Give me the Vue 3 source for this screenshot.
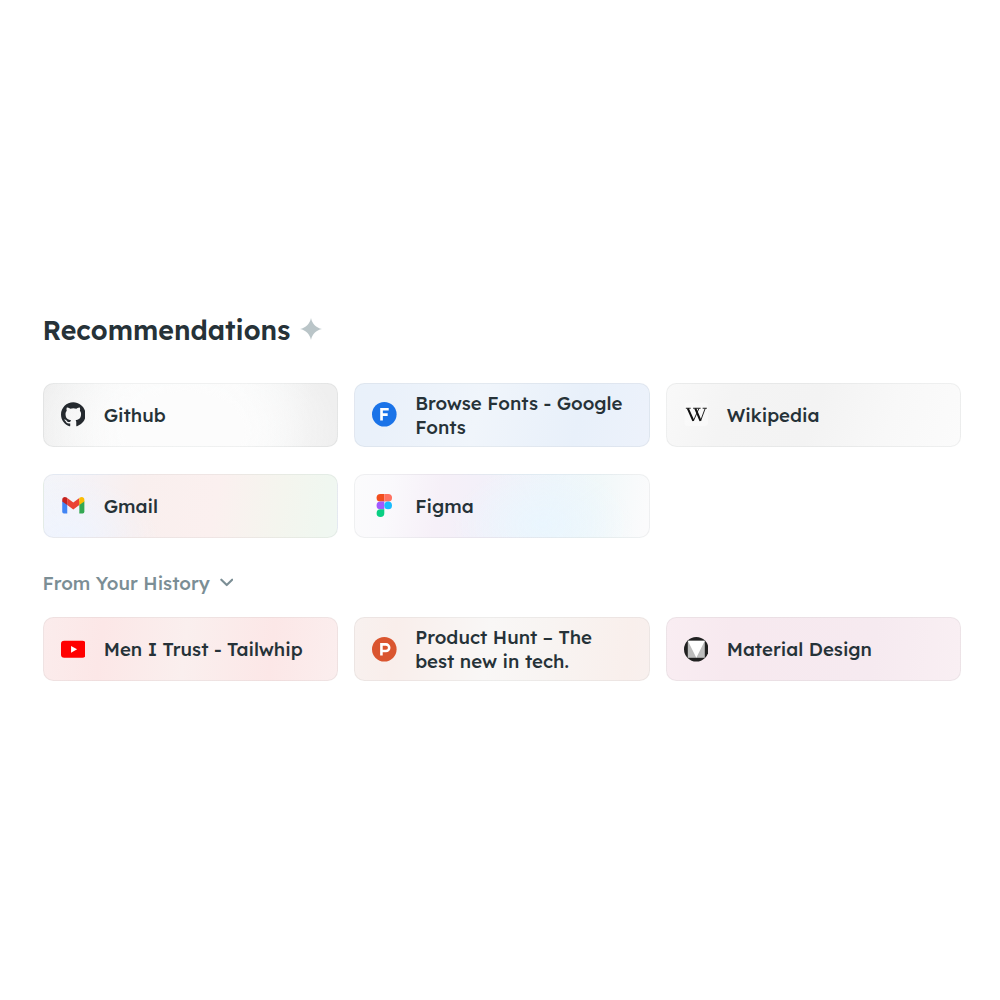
<script setup>
const recommended = [
  { id: 'github', lines: ['Github'] },
  { id: 'fonts', lines: ['Browse Fonts - Google', 'Fonts'] },
  { id: 'wikipedia', lines: ['Wikipedia'] },
  { id: 'gmail', lines: ['Gmail'] },
  { id: 'figma', lines: ['Figma'] }
]
const history = [
  { id: 'youtube', lines: ['Men I Trust - Tailwhip'] },
  { id: 'producthunt', lines: ['Product Hunt – The', 'best new in tech.'] },
  { id: 'material', lines: ['Material Design'] }
]
const groups = [recommended, history]
</script>

<template>
  <main class="page">
    <h1 class="title">
      <span>Recommendations</span>
      <svg class="spark" viewBox="0 0 22 22"><path d="M11 0 C12.300 6 16 9.700 22 11 C16 12.300 12.300 16 11 22 C9.700 16 6 12.300 0 11 C6 9.700 9.700 6 11 0Z" fill="#bac5c8" /></svg>
    </h1>

    <template v-for="(group, g) in groups" :key="g">
      <h2 v-if="g === 1" class="subtitle">
        <span>From Your History</span>
        <svg class="chevron" viewBox="0 0 14 9"><path d="M1.400 1.600 L7 7.100 L12.600 1.600" fill="none" stroke="#7b8e95" stroke-width="2.200" stroke-linecap="round" stroke-linejoin="round" /></svg>
      </h2>
      <div class="grid">
        <a v-for="item in group" :key="item.id" class="card" :class="item.id">
          <svg class="icon" viewBox="0 0 24 24">
            <path v-if="item.id === 'github'" fill="#24292e" fill-rule="evenodd" d="M12 .3C5.4.3 0 5.7 0 12.3c0 5.3 3.4 9.8 8.2 11.4.6.1.8-.3.8-.6v-2.2c-3.3.7-4-1.4-4-1.4-.6-1.4-1.4-1.8-1.4-1.8-1-.7.1-.7.1-.7 1.2.1 1.9 1.2 1.9 1.2 1 1.8 2.8 1.3 3.5 1 .1-.8.4-1.3.8-1.6-2.7-.3-5.5-1.3-5.5-5.900 0-1.300.5-2.400 1.200-3.200-.1-.3-.5-1.500.1-3.200 0 0 1-.3 3.300 1.200a11.500 11.500 0 0 1 6 0c2.300-1.500 3.300-1.200 3.300-1.200.7 1.700.2 2.900.1 3.200.8.8 1.200 1.900 1.200 3.200 0 4.600-2.800 5.600-5.500 5.900.4.4.8 1.100.8 2.200v3.300c0 .3.2.7.8.6A12 12 0 0 0 24 12.300C24 5.700 18.600.3 12 .3Z" />
            <g v-else-if="item.id === 'fonts'">
              <circle cx="12" cy="12" r="12" fill="#1a73e8" />
              <path d="M9.300 18V7.100H16.300M9.300 12.400H15.300" fill="none" stroke="#fff" stroke-width="2.600" />
            </g>
            <g v-else-if="item.id === 'wikipedia'">
              <rect x=".5" y=".5" width="23" height="23" rx="3" fill="#fff" opacity=".4" />
              <path d="M3.700 6.200 9.100 18.300M11 6.200 16.100 18.300" fill="none" stroke="#111" stroke-width="2" />
              <path d="M9.100 18.600 14.600 6.200M16.100 18.600 20.700 6.200M1.800 6.100H6.500M8.900 6.100H16.200M18.200 6.100H22.300" fill="none" stroke="#111" stroke-width=".9" />
            </g>
            <g v-else-if="item.id === 'gmail'">
              <path d="M1.200 8H6.100V20H2.800Q1.200 20 1.200 18.400Z" fill="#4285f4" />
              <path d="M17.900 8H22.800V18.400Q22.800 20 21.200 20H17.900Z" fill="#34a853" />
              <path d="M6.100 6.700V4.900L12 9.300 17.900 4.900V11.700L12 16.100 6.100 11.700Z" fill="#ea4335" />
              <path d="M1.200 6.500C1.200 3.800 3.900 3.200 5.500 4.400L6.100 4.900V11.700L1.200 8.400Z" fill="#c5221f" />
              <path d="M22.800 6.500C22.800 3.800 20.100 3.200 18.500 4.400L17.900 4.900V11.700L22.800 8.400Z" fill="#fbbc04" />
            </g>
            <g v-else-if="item.id === 'figma'">
              <path d="M12 .9H8.200A3.750 3.750 0 0 0 8.200 8.400H12Z" fill="#f24e1e" />
              <path d="M12 .9H15.800A3.750 3.750 0 0 1 15.800 8.400H12Z" fill="#ff7262" />
              <path d="M12 8.400H8.200A3.750 3.750 0 0 0 8.200 15.900H12Z" fill="#a259ff" />
              <circle cx="15.750" cy="12.150" r="3.750" fill="#1abcfe" />
              <path d="M12 15.900H8.200A3.750 3.750 0 1 0 12 19.700Z" fill="#0acf83" />
            </g>
            <g v-else-if="item.id === 'youtube'">
              <rect x="0" y="3.700" width="24" height="16.600" rx="3.200" fill="#f00" />
              <path d="M9.800 8.700 15.700 12 9.800 15.300Z" fill="#fff" />
            </g>
            <g v-else-if="item.id === 'producthunt'">
              <circle cx="12" cy="12" r="12" fill="#da552f" />
              <path d="M9.200 18V7.200H13.600A3.200 3.200 0 0 1 13.600 13.600H9.200" fill="none" stroke="#fff" stroke-width="2.500" />
            </g>
            <g v-else>
              <circle cx="12" cy="12" r="12" fill="#212121" />
              <path d="M3.700 3.700H20.300V20.300H3.700Z" fill="#bdbdbd" />
              <path d="M3.700 3.700H20.300L12 20.300Z" fill="#fff" />
            </g>
          </svg>
          <span class="label">
            <span v-for="line in item.lines" :key="line">{{ line }}</span>
          </span>
        </a>
      </div>
    </template>
  </main>
</template>

<style>
body {
  background: #fff;
}
</style>

<style scoped>
.page {
  box-sizing: border-box;
  height: 1000px;
  padding: 310px 38px 0 42.600px;
  font-family: Lexend, Inter, "Noto Sans", sans-serif;
  color: #263238;
}
.title {
  display: flex;
  align-items: center;
  height: 40px;
  margin: 0 0 32.600px;
  font-size: 26.667px;
  font-weight: 600;
}
.spark {
  width: 22px;
  height: 22px;
  margin: 0 0 2px 9.500px;
}
.grid {
  display: grid;
  grid-template-columns: repeat(3, 295.500px);
  column-gap: 16px;
  row-gap: 27px;
}
.card {
  box-sizing: border-box;
  display: flex;
  align-items: center;
  height: 64px;
  padding-left: 17.200px;
  border: 1px solid rgba(38, 50, 56, 0.055);
  border-radius: 10.500px;
}
.icon {
  flex: none;
  width: 24.600px;
  height: 24.600px;
  margin-right: 18.300px;
}
.label {
  display: flex;
  flex-direction: column;
  align-items: flex-start;
  font-size: 18.667px;
  font-weight: 500;
  line-height: 24px;
  white-space: nowrap;
}
.subtitle {
  display: flex;
  align-items: center;
  height: 24px;
  margin: 33px 0 22.800px;
  font-size: 18.667px;
  font-weight: 500;
  color: #7b8e95;
}
.chevron {
  width: 13.500px;
  height: 9px;
  margin-left: 9.800px;
}
.github {
  background:
    radial-gradient(ellipse 170px 110px at 48% 75%, #fcfcfc 0%, #fcfcfc 35%, rgba(252, 252, 252, 0) 90%),
    linear-gradient(95deg, #efefef 0%, #f3f4f4 15%, #fbfcfc 32%, #fbfcfc 62%, #f3f4f4 80%, #efefef 90%, #efefef 100%);
}
.fonts {
  background: linear-gradient(105deg, #e9f1fa 0%, #eaf1fa 12%, #f0f5fb 42%, #e8f0fa 75%, #edf2fb 100%);
}
.wikipedia {
  background: linear-gradient(110deg, #f9f9f9 0%, #f4f4f4 22%, #f3f3f3 50%, #f8f8f8 75%, #fbfbfb 100%);
}
.gmail {
  background:
    radial-gradient(ellipse 90px 60px at 8% 100%, #eff4fe 0%, rgba(239, 244, 254, 0) 100%),
    linear-gradient(100deg, #f3f5fa 0%, #f5f2f6 14%, #f9efee 32%, #fbf0ef 58%, #f4f5ee 80%, #f0f7f0 94%, #f0f7f2 100%);
}
.figma {
  background:
    radial-gradient(ellipse 90px 60px at 64% 80%, #eaf6fe 0%, rgba(234, 246, 254, 0) 100%),
    linear-gradient(100deg, #fbfbfc 0%, #faf9fc 12%, #f6f0f8 29%, #f3f0f9 42%, #eef5fa 66%, #f1f8f9 80%, #fbfbfc 98%);
}
.youtube {
  background: linear-gradient(97deg, #fbecec 0%, #fce7e7 20%, #faefee 48%, #fce7e7 77%, #fbeeee 100%);
}
.producthunt {
  background: linear-gradient(97deg, #f8f1ef 0%, #f9eeeb 14%, #f9f7f6 45%, #f8f4f2 65%, #f9efec 92%, #f8f0ee 100%);
}
.material {
  background: linear-gradient(97deg, #f9edf2 0%, #f7e9ef 22%, #f6eaf0 70%, #f9eff3 100%);
}
</style>
